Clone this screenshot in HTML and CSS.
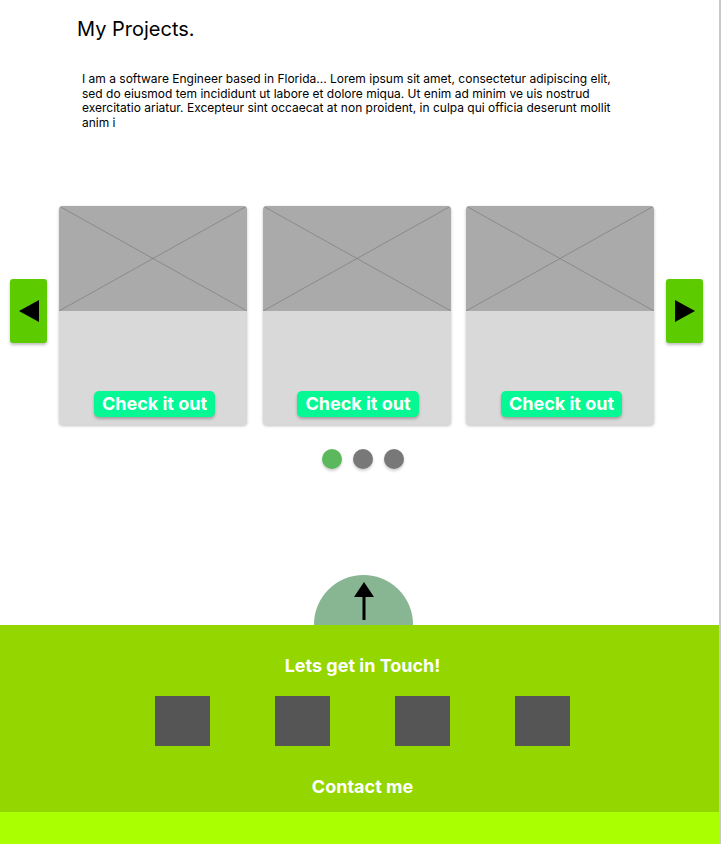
FILE: index.html
```html
<!DOCTYPE html>
<html lang="en">
<head>
  <meta charset="UTF-8" />
  <meta name="viewport" content="width=device-width, initial-scale=1.0"/>
  <title>My Projects</title>
  <link rel="stylesheet" href="styles.css">
</head>
<body>

  <!-- Intro -->
  <div class="intro">
    <h1>My Projects.</h1>
    <p>I am a software Engineer based in Florida... Lorem ipsum sit amet, consectetur adipiscing elit, sed do eiusmod tem incididunt ut labore et dolore miqua. Ut enim ad minim ve uis nostrud exercitatio ariatur. Excepteur sint occaecat at non proident, in culpa qui officia deserunt mollit anim i</p>
  </div>

  <!-- Carousel -->
  <div class="carousel">
    <button class="arrow-btn" aria-label="Previous">
      <svg width="20" height="22" viewBox="0 0 20 22"><polygon points="20,0 20,22 0,11" fill="#000"/></svg>
    </button>

    <div class="cards">
      <div class="card">
        <div class="card-img">
          <svg width="188" height="105" viewBox="0 0 188 105" preserveAspectRatio="none"><line x1="0" y1="0" x2="188" y2="105"/><line x1="188" y1="0" x2="0" y2="105"/></svg>
        </div>
        <div class="card-body"><span class="check-btn">Check it out</span></div>
      </div>
      <div class="card">
        <div class="card-img">
          <svg width="188" height="105" viewBox="0 0 188 105" preserveAspectRatio="none"><line x1="0" y1="0" x2="188" y2="105"/><line x1="188" y1="0" x2="0" y2="105"/></svg>
        </div>
        <div class="card-body"><span class="check-btn">Check it out</span></div>
      </div>
      <div class="card">
        <div class="card-img">
          <svg width="188" height="105" viewBox="0 0 188 105" preserveAspectRatio="none"><line x1="0" y1="0" x2="188" y2="105"/><line x1="188" y1="0" x2="0" y2="105"/></svg>
        </div>
        <div class="card-body"><span class="check-btn">Check it out</span></div>
      </div>
    </div>

    <button class="arrow-btn" aria-label="Next">
      <svg width="20" height="22" viewBox="0 0 20 22"><polygon points="0,0 0,22 20,11" fill="#000"/></svg>
    </button>
  </div>

  <div class="dots">
    <span class="dot active"></span>
    <span class="dot"></span>
    <span class="dot"></span>
  </div>

  <!-- Back to top -->
  <div class="top-btn">
    <svg width="22" height="40" viewBox="0 0 22 40"><polygon points="11,0 21,15 1,15" fill="#000"/><rect x="9.5" y="13" width="3" height="25" fill="#000"/></svg>
  </div>

  <!-- Contact -->
  <div class="contact">
    <h2>Lets get in Touch!</h2>
    <div class="socials">
      <span class="social"></span>
      <span class="social"></span>
      <span class="social"></span>
      <span class="social"></span>
    </div>
    <h3>Contact me</h3>
  </div>
  <div class="footer"></div>

</body>
</html>
```

FILE: styles.css
```css
body {
  font-family: Inter, 'Noto Sans', sans-serif;
  margin: 0;
  padding: 0;
  width: 719px;
  min-height: 844px;
  border-right: 2px solid #c9c9c9;
  background: #fff;
}

.intro {
  padding: 15px 0 0 77px;
}

.intro h1 {
  font-size: 20px;
  font-weight: 400;
  margin: 0;
  line-height: 28px;
  color: #000;
}

.intro p {
  font-size: 12px;
  line-height: 14.5px;
  margin: 29px 0 0 5px;
  width: 545px;
  color: #000;
}

.carousel {
  display: flex;
  align-items: center;
  gap: 12px;
  margin-top: 76px;
  padding-left: 10px;
}

.arrow-btn {
  width: 37px;
  height: 64px;
  background: #5ccc00;
  border: none;
  border-radius: 3px;
  box-shadow: 0 2px 3px rgba(0, 0, 0, 0.25);
  padding: 0;
  display: flex;
  align-items: center;
  justify-content: center;
  margin-bottom: 9px;
}

.cards {
  display: flex;
  gap: 15.5px;
}

.card {
  width: 188px;
  height: 219px;
  border-radius: 4px;
  overflow: hidden;
  background: #d9d9d9;
  box-shadow: 0 1px 3px rgba(0, 0, 0, 0.25);
  display: flex;
  flex-direction: column;
}

.card-img {
  height: 105px;
  background: #aaaaaa;
}

.card-img svg {
  display: block;
}

.card-img line {
  stroke: #7d7d7d;
  stroke-width: 0.7;
}

.card-body {
  flex: 1;
  display: flex;
  align-items: flex-end;
  justify-content: center;
  padding-bottom: 8px;
  padding-left: 3px;
}

.check-btn {
  background: #05f894;
  color: #fff;
  font-weight: 700;
  font-size: 18px;
  line-height: 26px;
  padding: 0 8px;
  border-radius: 5px;
  box-shadow: 0 2px 3px rgba(0, 0, 0, 0.25);
}

.dots {
  display: flex;
  justify-content: center;
  gap: 11px;
  margin-top: 24px;
  padding-left: 7px;
}

.dot {
  width: 20px;
  height: 20px;
  border-radius: 50%;
  background: #787878;
  box-shadow: 0 2px 3px rgba(0, 0, 0, 0.2);
}

.dot.active {
  background: #5cb85c;
}

.top-btn {
  width: 99px;
  height: 50px;
  margin: 106px 0 0 314px;
  background: #88b592;
  border-radius: 50px 50px 0 0;
  display: flex;
  justify-content: center;
}

.top-btn svg {
  margin-top: 7px;
}

.contact {
  background: #94d600;
  height: 187px;
  color: #fff;
  text-align: center;
  padding: 30px 0 0 6px;
  box-sizing: border-box;
}

.contact h2 {
  font-size: 18px;
  font-weight: 700;
  margin: 0;
  line-height: 22px;
}

.socials {
  display: flex;
  justify-content: center;
  gap: 65px;
  margin-top: 19px;
}

.social {
  width: 55px;
  height: 50px;
  background: #555555;
}

.contact h3 {
  font-size: 18px;
  font-weight: 700;
  margin: 30px 0 0;
  line-height: 22px;
}

.footer {
  background: #aaff00;
  height: 32px;
}
```
